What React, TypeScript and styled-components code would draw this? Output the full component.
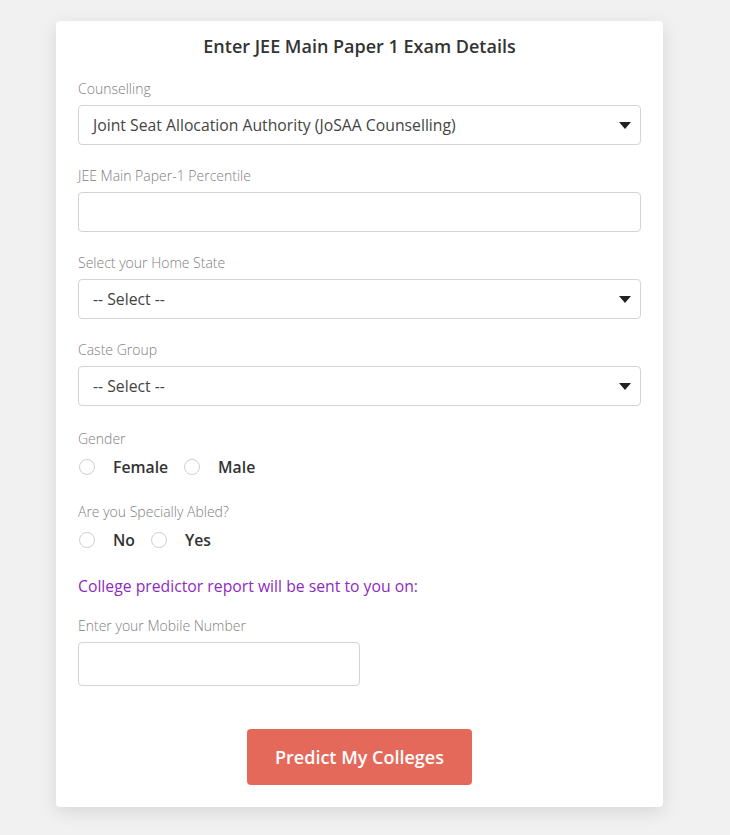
import React from 'react'
import styled, { createGlobalStyle } from 'styled-components'

const GlobalStyle = createGlobalStyle`
  html, body {
    margin: 0;
    padding: 0;
    background: #f1f1f1;
    font-family: "Open Sans", "Liberation Sans", sans-serif;
  }
`

const fields = [
  { id: 'counselling', label: 'Counselling', kind: 'select', value: 'Joint Seat Allocation Authority (JoSAA Counselling)' },
  { id: 'percentile', label: 'JEE Main Paper-1 Percentile', kind: 'input' },
  { id: 'state', label: 'Select your Home State', kind: 'select', value: '-- Select --' },
  { id: 'caste', label: 'Caste Group', kind: 'select', value: '-- Select --' },
]

const radios = [
  { id: 'gender', label: 'Gender', options: ['Female', 'Male'] },
  { id: 'abled', label: 'Are you Specially Abled?', options: ['No', 'Yes'] },
]

const Caret = () => (
  <svg width="12" height="7" viewBox="0 0 12 7">
    <path d="M0 0 L12 0 L6 7 Z" fill="#222" />
  </svg>
)

const App = () => {
  return (
    <>
      <GlobalStyle />
      <Page>
        <Card>
          <Title>Enter JEE Main Paper 1 Exam Details</Title>
          {fields.map(f => (
            <Group key={f.id}>
              <Label>{f.label}</Label>
              {f.kind === 'select' ? (
                <SelectBox>
                  <span>{f.value}</span>
                  <Caret />
                </SelectBox>
              ) : (
                <TextInput type="text" />
              )}
            </Group>
          ))}
          <RadioBlock>
            {radios.map(r => (
              <RadioGroup key={r.id}>
                <Label>{r.label}</Label>
                <RadioRow>
                  {r.options.map(o => (
                    <RadioItem key={o}>
                      <Circle />
                      {o}
                    </RadioItem>
                  ))}
                </RadioRow>
              </RadioGroup>
            ))}
          </RadioBlock>
          <Notice>College predictor report will be sent to you on:</Notice>
          <Group>
            <Label>Enter your Mobile Number</Label>
            <MobileInput type="tel" />
          </Group>
          <ButtonRow>
            <PredictButton>Predict My Colleges</PredictButton>
          </ButtonRow>
        </Card>
      </Page>
    </>
  )
}

export default App

const Page = styled.div`
  padding: 21px 0 28px 56px;
`

const Card = styled.div`
  width: 607px;
  box-sizing: border-box;
  background: #fff;
  border-radius: 4px;
  box-shadow: 0 5px 18px rgba(0, 0, 0, 0.11);
  padding: 13px 22px 22px;
  display: flex;
  flex-direction: column;
`

const Title = styled.h2`
  margin: 0 0 21px;
  text-align: center;
  font-size: 18px;
  line-height: 24px;
  font-weight: 600;
  color: #333;
`

const Group = styled.div`
  display: flex;
  flex-direction: column;
  margin-bottom: 21px;
`

const RadioBlock = styled.div`
  margin-top: 2px;
`

const RadioGroup = styled.div`
  display: flex;
  flex-direction: column;
  margin-bottom: 23px;
`

const Label = styled.label`
  font-size: 14px;
  line-height: 20px;
  font-weight: 300;
  color: #808080;
  margin-bottom: 6px;
`

const SelectBox = styled.div`
  height: 40px;
  box-sizing: border-box;
  border: 1px solid #d3d3d3;
  border-radius: 4px;
  display: flex;
  align-items: center;
  justify-content: space-between;
  padding: 0 9px 0 14px;
  font-size: 15.75px;
  color: #444;
`

const TextInput = styled.input`
  height: 40px;
  box-sizing: border-box;
  border: 1px solid #d3d3d3;
  border-radius: 4px;
  outline: none;
  font: inherit;
`

const MobileInput = styled(TextInput)`
  width: 282px;
  height: 44px;
  margin-bottom: 22px;
`

const RadioRow = styled.div`
  display: flex;
  align-items: center;
  gap: 15px;
  height: 24px;
`

const RadioItem = styled.div`
  display: flex;
  align-items: center;
  gap: 18px;
  font-size: 15.75px;
  font-weight: 600;
  color: #333;
`

const Circle = styled.span`
  width: 16px;
  height: 16px;
  box-sizing: border-box;
  border: 1px solid #cfcfcf;
  border-radius: 50%;
  margin-left: 1px;
`

const Notice = styled.p`
  margin: 0 0 19px;
  font-size: 15.75px;
  line-height: 22px;
  color: #8e2bc1;
`

const ButtonRow = styled.div`
  display: flex;
  justify-content: center;
`

const PredictButton = styled.button`
  width: 225px;
  height: 56px;
  border: none;
  border-radius: 4px;
  background: #e5695a;
  color: #fff;
  font-family: inherit;
  font-size: 18px;
  font-weight: 600;
  cursor: pointer;
`
